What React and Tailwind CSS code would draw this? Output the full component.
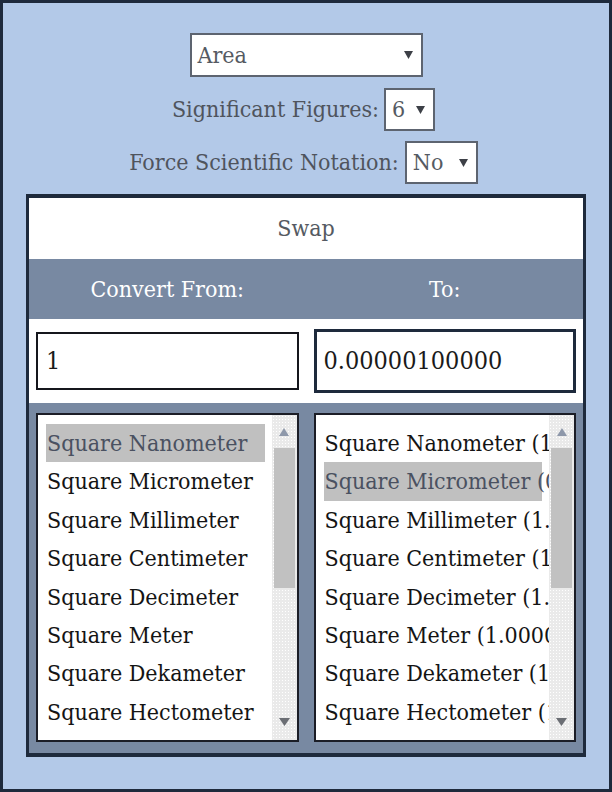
import React from "react";

const units = [
  "Square Nanometer",
  "Square Micrometer",
  "Square Millimeter",
  "Square Centimeter",
  "Square Decimeter",
  "Square Meter",
  "Square Dekameter",
  "Square Hectometer",
  "Square Kilometer",
];

const results = [
  "(1.00000)",
  "(0.00000100000)",
  "(1.00000e-12)",
  "(1.00000e-14)",
  "(1.00000e-16)",
  "(1.00000e-18)",
  "(1.00000e-20)",
  "(1.00000e-22)",
  "(1.00000e-24)",
];

function Arrow({ className = "" }) {
  return (
    <svg width="9" height="8" viewBox="0 0 9 8" className={className}>
      <path d="M0 0 L9 0 L4.5 8 Z" fill="#3d4047" />
    </svg>
  );
}

function Select({ value, className = "" }) {
  return (
    <div
      className={`flex items-center justify-between border-2 border-[#5d6470] bg-white pl-[6px] pr-[8px] text-[23px] leading-none text-[#555a62] ${className}`}
    >
      <span>{value}</span>
      <Arrow />
    </div>
  );
}

function Scrollbar() {
  return (
    <div className="flex w-[25px] shrink-0 flex-col items-center bg-[#eaeaea] bg-[radial-gradient(#ffffff_0.8px,transparent_0.8px)] bg-[length:3px_3px] pt-[13px] pb-[14px]">
      <svg width="10" height="8" viewBox="0 0 10 8">
        <path d="M5 0 L10 8 L0 8 Z" fill="#8e98aa" />
      </svg>
      <div className="mt-[12px] h-[140px] w-[21px] bg-[#c1c1c1]" />
      <div className="flex-1" />
      <svg width="11" height="8" viewBox="0 0 11 8">
        <path d="M0 0 L11 0 L5.5 8 Z" fill="#6b6e74" />
      </svg>
    </div>
  );
}

function UnitList({ items, selected }) {
  return (
    <div className="flex h-[329px] overflow-hidden border-2 border-[#1b1d26] bg-white">
      <div className="min-w-0 flex-1 overflow-hidden pl-[8px] pr-[3px] pt-[9px]">
        {items.map((item, i) => (
          <div
            key={item}
            className={`mr-[4px] h-[38.4px] whitespace-nowrap px-[1px] text-[23px] leading-[38.4px] ${
              i === selected ? "bg-[#c0c0c0] text-[#4a5161]" : "text-[#141414]"
            }`}
          >
            {item}
          </div>
        ))}
      </div>
      <Scrollbar />
    </div>
  );
}

export default function App() {
  return (
    <div className="box-border h-[792px] w-[612px] overflow-hidden border-[3px] border-[#1e2a3c] bg-[#b3c9e8] font-['DejaVu_Serif',serif] font-stretch-condensed">
      <div className="flex flex-col items-center pt-[30px]">
        <Select value="Area" className="h-[44px] w-[233px]" />
        <div className="mt-[11px] flex items-center gap-[5px] pr-[5px] text-[23px] text-[#4f545d]">
          <span>Significant Figures:</span>
          <Select value="6" className="h-[43px] w-[51px]" />
        </div>
        <div className="mt-[10px] flex items-center gap-[6px] pr-[5px] text-[23px] text-[#4f545d]">
          <span>Force Scientific Notation:</span>
          <Select value="No" className="h-[43px] w-[73px]" />
        </div>
      </div>

      <div className="ml-[23px] mt-[10px] w-[560px] border-x-[3px] border-y-4 border-[#1e2a3c]">
        <div className="flex h-[61px] items-center justify-center bg-white text-[23px] text-[#555a62]">
          Swap
        </div>
        <div className="grid h-[60px] grid-cols-2 items-center gap-[15px] bg-[#7889a2] px-[7px] text-center text-[23px] text-white">
          <div>Convert From:</div>
          <div>To:</div>
        </div>
        <div className="grid h-[84px] grid-cols-2 items-center gap-[15px] bg-white px-[7px]">
          <div className="flex h-[58px] items-center border-2 border-[#15161c] pl-[8px] text-[25px] text-[#1a1a1a]">
            1
          </div>
          <div className="flex h-[64px] items-center border-[3px] border-[#1e2a3c] pl-[7px] text-[25px] text-[#1a1a1a]">
            0.00000100000
          </div>
        </div>
        <div className="grid h-[350px] grid-cols-2 gap-[15px] bg-[#7889a2] px-[7px] pt-[10px]">
          <UnitList items={units} selected={0} />
          <UnitList items={units.map((u, i) => `${u} ${results[i]}`)} selected={1} />
        </div>
      </div>
    </div>
  );
}
